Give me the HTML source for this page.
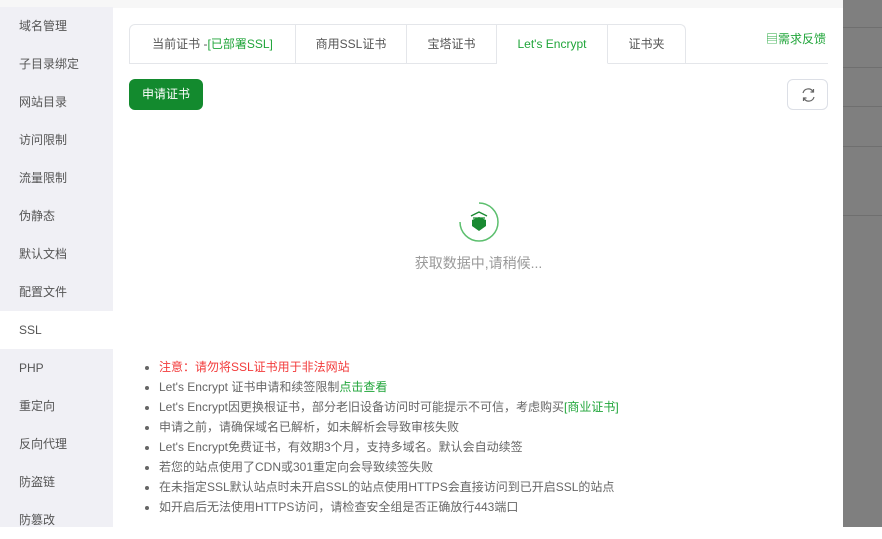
<!DOCTYPE html>
<html><head><meta charset="utf-8"><style>
*{margin:0;padding:0;box-sizing:border-box}
body{width:882px;height:527px;overflow:hidden;position:relative;background:#fff;font-family:"Liberation Sans","Noto Sans CJK SC",sans-serif;}
.top{position:absolute;left:0;top:0;width:843px;height:8px;background:#f7f7f7}
.side{position:absolute;left:0;top:7px;width:113px;height:520px;background:#f0f0f5}
.side div{height:38px;line-height:38px;padding-left:19px;font-size:12px;color:#555}
.side .act{background:#fff;color:#555}
.right{position:absolute;left:843px;top:0;width:39px;height:527px;background:#7f7f7f}
.right i{position:absolute;left:0;width:39px;height:1px;background:#6f6f6f}
.tabs{position:absolute;left:129px;top:24px;height:40px;display:flex;border:1px solid #e4e6ea;border-bottom:none;border-radius:6px 6px 0 0}
.tabs div{height:39px;line-height:39px;text-align:center;font-size:12px;color:#555;border-right:1px solid #e4e6ea;border-bottom:1px solid #e4e6ea}
.tabs div:last-child{border-right:none}
.tabs .on{color:#20a53a;border-bottom-color:#fff}
.line{position:absolute;left:684px;top:63px;width:144px;height:1px;background:#e4e6ea}
.fb{position:absolute;left:766px;top:30px;font-size:12px;color:#20a53a}
.btn{position:absolute;left:129px;top:79px;width:74px;height:31px;background:#138a2e;border-radius:6px;color:#fff;font-size:12px;line-height:31px;text-align:center}
.ref{position:absolute;left:787px;top:79px;width:41px;height:31px;border:1px solid #dcdfe6;border-radius:6px}
.panel{position:absolute;left:129px;top:123px;width:699px;height:219px}
.load{position:absolute;left:0;top:130px;width:699px;text-align:center;font-size:14px;color:#999}
ul{position:absolute;left:159px;top:357px;font-size:12px;color:#666;list-style:none}
li{height:20px;line-height:20px;position:relative}
li:before{content:"";position:absolute;left:-14px;top:9px;width:4px;height:4px;border-radius:2px;background:#666}
.g{color:#20a53a}
</style></head><body>
<div class="top"></div>
<div class="side">
<div>域名管理</div><div>子目录绑定</div><div>网站目录</div><div>访问限制</div><div>流量限制</div><div>伪静态</div><div>默认文档</div><div>配置文件</div><div class="act">SSL</div><div>PHP</div><div>重定向</div><div>反向代理</div><div>防盗链</div><div>防篡改</div>
</div>
<div class="right"><i style="top:27px"></i><i style="top:67px"></i><i style="top:106px"></i><i style="top:146px"></i><i style="top:215px"></i></div>
<div class="tabs">
<div style="width:166px">当前证书 -<span class="g">[已部署SSL]</span></div>
<div style="width:111px">商用SSL证书</div>
<div style="width:90px">宝塔证书</div>
<div class="on" style="width:111px">Let's Encrypt</div>
<div style="width:77px">证书夹</div>
</div>
<div class="line"></div>
<div class="fb">▤需求反馈</div>
<div class="btn">申请证书</div>
<div class="ref"><svg width="41" height="31" viewBox="0 0 41 31"><path d="M15 13a5.5 5.5 0 0 1 10-1.5M26 17a5.5 5.5 0 0 1-10 1.5" fill="none" stroke="#666" stroke-width="1.2"/><path d="M25.5 9v3h-3M15.5 21v-3h3" fill="none" stroke="#666" stroke-width="1.2"/></svg></div>
<div class="panel">
<svg style="position:absolute;left:328px;top:77px" width="44" height="44" viewBox="0 0 44 44"><path d="M22 3a19 19 0 1 1-19 19" fill="none" stroke="#5cbf6e" stroke-width="1.5"/><path d="M15 20l7-3 7 3v6l-7 5-7-5z" fill="#1a8a32"/><path d="M14 16l8-4 8 4M16 18h12" stroke="#1a8a32" stroke-width="1.3" fill="none"/></svg>
<div class="load">获取数据中,请稍候...</div>
</div>
<ul>
<li style="color:#ef0808cc">注意：请勿将SSL证书用于非法网站</li>
<li>Let's Encrypt 证书申请和续签限制<span class="g">点击查看</span></li>
<li>Let's Encrypt因更换根证书，部分老旧设备访问时可能提示不可信，考虑购买<span class="g">[商业证书]</span></li>
<li>申请之前，请确保域名已解析，如未解析会导致审核失败</li>
<li>Let's Encrypt免费证书，有效期3个月，支持多域名。默认会自动续签</li>
<li>若您的站点使用了CDN或301重定向会导致续签失败</li>
<li>在未指定SSL默认站点时未开启SSL的站点使用HTTPS会直接访问到已开启SSL的站点</li>
<li>如开启后无法使用HTTPS访问，请检查安全组是否正确放行443端口</li>
</ul>
</body></html>
